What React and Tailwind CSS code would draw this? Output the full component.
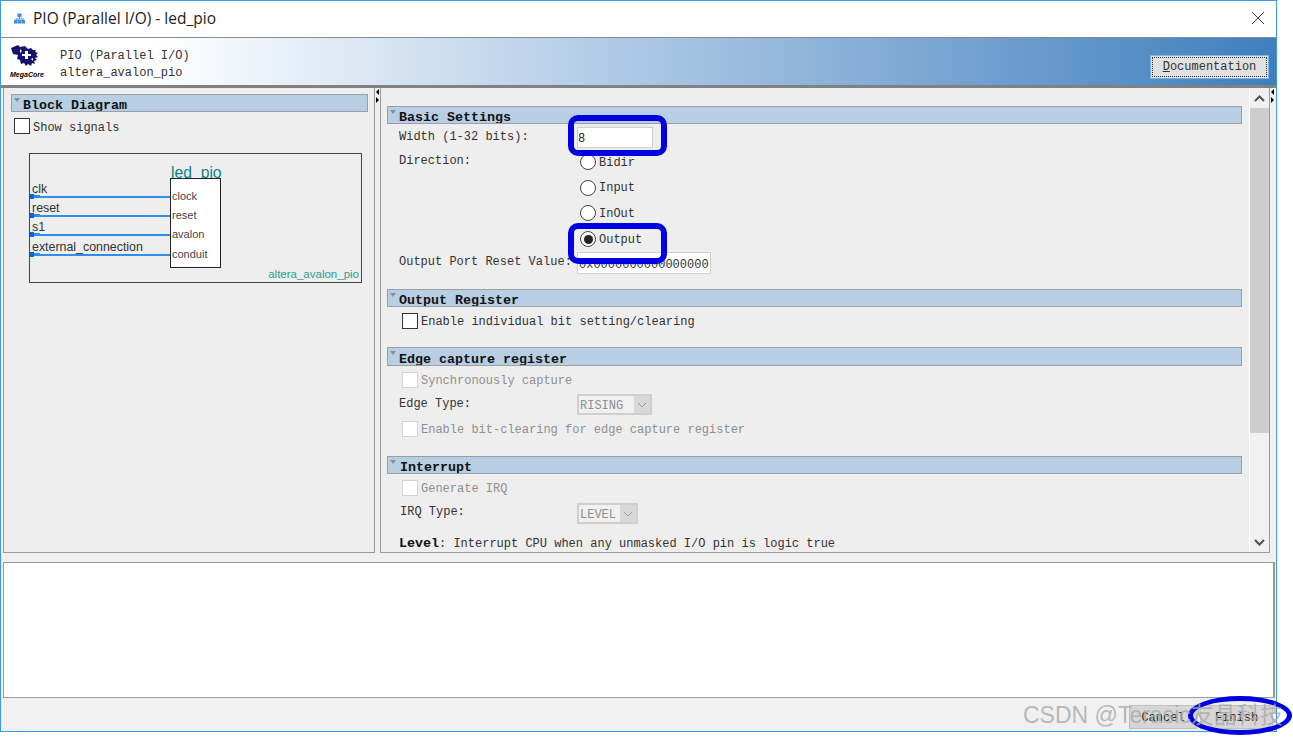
import React from "react";

const mono = "font-['Liberation_Mono',monospace]";

function Tri() {
  return <span className="self-start mt-[3px] ml-[1px] mr-[3px] w-0 h-0 border-x-[3px] border-x-transparent border-t-[4px] border-t-[#8a8f96] shrink-0" />;
}

function Bar({ title, h = "h-[18px]", titleClass = "" }) {
  return (
    <div className={`${h} flex items-end pl-[1px] bg-[#b8cee3] border border-[#9a9fa5] overflow-hidden`}>
      <Tri />
      <span className={`${mono} font-bold text-[13.33px] leading-[14px] mb-[-2px] text-[#111] whitespace-pre ${titleClass}`}>{title}</span>
    </div>
  );
}

function Check({ label, disabled, className = "" }) {
  return (
    <div className={`flex items-center h-[16px] pl-[3px] ${className}`}>
      <span className={`w-[16px] h-[16px] bg-white border shrink-0 ${disabled ? "border-[#d4d4d4]" : "border-[#333]"}`} />
      <span className={`ml-[3px] pt-[2px] text-[12px] whitespace-pre ${disabled ? "text-[#8f8f8f]" : "text-[#333]"}`}>{label}</span>
    </div>
  );
}

function Radio({ label, checked, h = "h-[26px]", labelClass = "pt-[2px]" }) {
  return (
    <div className={`flex items-center ${h} pl-[3px]`}>
      <span className="w-[16px] h-[16px] rounded-full bg-white border border-[#444] flex items-center justify-center shrink-0">
        {checked && <span className="w-[9px] h-[9px] rounded-full bg-[#222]" />}
      </span>
      <span className={`ml-[3px] text-[12px] text-[#333] ${labelClass}`}>{label}</span>
    </div>
  );
}

function Select({ value, w }) {
  return (
    <div className={`${w} h-[21px] bg-[#cfcfcf] p-[2px] flex`}>
      <div className="flex-1 bg-[#f0f0f0] text-[#8f8f8f] text-[12px] leading-[20px] pl-[1px]">{value}</div>
      <div className="w-[16px] bg-[#d8d8d8] flex items-center justify-center">
        <svg width="10" height="6" viewBox="0 0 10 6" fill="none" stroke="#9a9a9a" strokeWidth="1"><path d="M1 1l4 4 4-4" /></svg>
      </div>
    </div>
  );
}

function Logo() {
  return (
    <div className="w-[35px] flex flex-col items-start">
      <svg className="ml-[1px]" width="28" height="22" viewBox="0 0 28 22">
        <path d="M0 3 L7 0 L9 2 L14 1 L17 4 L20 3 L22 5 L25 5 L24 7 L27 8 L25 10 L27 12 L24 13 L26 15 L23 16 L24 19 L21 18 L20 21 L17 19 L15 21 L13 18 L10 19 L9 15 L6 14 L7 10 L2 9 Z" fill="#14146e" />
        <path d="M11 9h3V6h3v3h3v2h-3v3h-3v-3h-3z" fill="#fff" />
        <path d="M9 4l2 2-2 2zM20 14l2-1v3z" fill="#fff" />
      </svg>
      <span className="font-['Liberation_Sans',sans-serif] font-bold italic text-[7px] leading-[8px] text-black mt-[4px] whitespace-pre">MegaCore</span>
    </div>
  );
}

function Diagram() {
  const ys = [196, 215, 234, 254];
  const wires = ["clk", "reset", "s1", "external_connection"];
  const ports = ["clock", "reset", "avalon", "conduit"];
  return (
    <div className="relative mt-[19px] ml-[25px] w-[333px] h-[130px] border border-[#444] font-['Liberation_Sans',sans-serif] text-[12px] text-[#333]">
      <svg className="absolute left-0 top-0" width="331" height="128">
        {ys.map((y) => (
          <g key={y}>
            <rect x="0" y={y - 154} width="140" height="2" fill="#2f8eea" />
            <rect x="0" y={y - 155} width="10" height="3" fill="#2f8eea" />
            <rect x="0" y={y - 156} width="4" height="5" fill="#0a64dc" />
          </g>
        ))}
      </svg>
      {wires.map((t, i) => (
        <span key={t} className="absolute left-[2px] leading-[14px] text-[12.4px]" style={{ top: ys[i] - 168 }}>{t}</span>
      ))}
      <span className="absolute left-[141px] top-[10px] text-[15.7px] leading-[18px] text-[#0b8583]">led_pio</span>
      <div className="absolute left-[140px] top-[24px] w-[51px] h-[90px] bg-white border border-[#222]">
        {ports.map((t, i) => (
          <span key={t} className="absolute left-[1px] leading-[14px] text-[11px] text-[#444]" style={{ top: ys[i] - 186 }}>{t}</span>
        ))}
      </div>
      <span className="absolute right-[2px] top-[114px] text-[11.5px] leading-[13px] text-[#2a9d96]">altera_avalon_pio</span>
    </div>
  );
}

function Splitter() {
  return (
    <div className="w-[5px] flex flex-col items-center pt-[1px] gap-[2px] shrink-0">
      <span className="w-0 h-0 border-y-[3px] border-y-transparent border-r-[3px] border-r-black" />
      <span className="w-0 h-0 border-y-[3px] border-y-transparent border-l-[3px] border-l-black" />
    </div>
  );
}

function Settings() {
  return (
    <div className={`flex-1 min-w-0 h-full pt-[18px] pl-[6px] overflow-hidden ${mono} text-[12px] text-[#333]`}>
      <Bar title="Basic Settings" />
      <div className="pl-[12px]">
        <div className="flex mt-[3px] h-[21px]">
          <span className="w-[178px] leading-[20px]">Width (1-32 bits):</span>
          <div className="w-[76px] h-[21px] bg-white border border-[#d0d0d0] leading-[22px] text-[#222]">8</div>
        </div>
        <div className="flex">
          <span className="w-[178px] leading-[26px]">Direction:</span>
          <div className="flex flex-col mt-[1px]">
            <Radio label="Bidir" />
            <Radio label="Input" h="h-[25px]" labelClass="" />
            <Radio label="InOut" />
            <Radio label="Output" checked />
          </div>
        </div>
        <div className="flex h-[22px]">
          <span className="w-[178px] leading-[20px] whitespace-pre">Output Port Reset Value:</span>
          <div className="w-[134px] h-[22px] bg-white border border-[#d0d0d0] pl-[1px] leading-[24px] text-[#333]">0x0000000000000000</div>
        </div>
      </div>

      <div className="mt-[15px]"><Bar title="Output Register" /></div>
      <div className="pl-[12px] mt-[6px]"><Check label="Enable individual bit setting/clearing" /></div>

      <div className="mt-[18px]"><Bar title="Edge capture register" h="h-[19px]" /></div>
      <div className="pl-[12px]">
        <Check disabled label="Synchronously capture" className="mt-[6px]" />
        <div className="flex mt-[6px]">
          <span className="w-[178px] leading-[20px]">Edge Type:</span>
          <Select value="RISING" w="w-[75px]" />
        </div>
        <Check disabled label="Enable bit-clearing for edge capture register" className="mt-[6px]" />
      </div>

      <div className="mt-[19px]"><Bar title="Interrupt" titleClass="ml-[1px]" /></div>
      <div className="pl-[12px]">
        <Check disabled label="Generate IRQ" className="mt-[6px]" />
        <div className="flex mt-[7px]">
          <span className="w-[178px] leading-[18px] pl-[1px]">IRQ Type:</span>
          <Select value="LEVEL" w="w-[61px]" />
        </div>
        <div className="mt-[11px] leading-[18px] whitespace-pre"><b className="text-[13.33px] text-[#111]">Level</b>: Interrupt CPU when any unmasked I/O pin is logic true</div>
      </div>
    </div>
  );
}

function Scrollbar() {
  return (
    <div className="w-[20px] h-full shrink-0 ml-[7px] bg-[#f0f0f0] border-l border-white flex flex-col items-center">
      <div className="h-[20px] flex items-center justify-center">
        <svg width="11" height="7" viewBox="0 0 11 7" fill="none" stroke="#505050" strokeWidth="2"><path d="M1 6l4.500-4.500L10 6" /></svg>
      </div>
      <div className="w-full h-[325px] bg-[#cdcdcd]" />
      <div className="flex-1" />
      <div className="h-[20px] flex items-center justify-center">
        <svg width="11" height="7" viewBox="0 0 11 7" fill="none" stroke="#505050" strokeWidth="2"><path d="M1 1l4.500 4.500L10 1" /></svg>
      </div>
    </div>
  );
}

export default function App() {
  return (
    <div className="relative w-[1293px] h-[737px] bg-white overflow-hidden">
      <div className="w-[1277px] h-[732px] flex flex-col border border-[#3f9ae2] bg-[#f0f0f0]">
        <div className="h-[37px] shrink-0 pb-[2px] bg-white flex items-center font-['Open_Sans',sans-serif] text-[#222] border-b border-[#8b8b8b]">
          <svg className="ml-[13px]" width="11" height="11" viewBox="0 0 11 11" fill="#3a8fd8">
            <rect x="3.500" y="0.500" width="4" height="3.500" />
            <rect x="0" y="7" width="3.500" height="3.500" />
            <rect x="3.700" y="7" width="3.500" height="3.500" />
            <rect x="7.500" y="7" width="3.500" height="3.500" />
            <path d="M5 4h1v1.500h3.500V7h-1V6.500H2.500V7h-1V5.500H5z" />
          </svg>
          <span className="ml-[8px] text-[15.5px] leading-[20px]">PIO (Parallel I/O) - led_pio</span>
          <svg className="ml-auto mr-[11px]" width="14" height="14" viewBox="0 0 14 14" stroke="#444" strokeWidth="1" fill="none"><path d="M1 1l12 12M13 1L1 13" /></svg>
        </div>

        <div className="h-[50px] shrink-0 flex items-center pl-[9px] bg-linear-to-r from-white from-[12%] to-[#3e7fbd] border-b-[3px] border-[#7f8285] pr-[7px]">
          <Logo />
          <div className={`${mono} ml-[15px] mt-[6px] text-[12px] leading-[17px] text-[#333] whitespace-pre`}>
            <div>PIO (Parallel I/O)</div>
            <div>altera_avalon_pio</div>
          </div>
          <div className="ml-auto mt-[11px] w-[119px] h-[24px] bg-[#e1e1e1] border border-[#7fb6ea] p-[1px]">
            <div className={`${mono} h-full border border-dotted border-[#333] text-center text-[12px] leading-[18px] text-[#333]`}>
              <span className="underline">D</span>ocumentation
            </div>
          </div>
        </div>

        <div className="h-[465px] shrink-0 flex pl-[2px]">
          <div className="w-[372px] h-full border-x border-b border-[#9a9a9a] bg-[#eeeeee] pt-[6px] px-[7px] font-['Liberation_Mono',monospace] text-[12px] text-[#333]">
            <div className="w-[357px]"><Bar title="Block Diagram" /></div>
            <div className="flex items-center h-[16px] mt-[6px] pl-[3px]">
              <span className="w-[16px] h-[16px] bg-white border border-[#333]" />
              <span className="ml-[3px] pt-[3px]">Show signals</span>
            </div>
            <div className="-ml-[7px]"><Diagram /></div>
          </div>
          <Splitter />
          <div className="w-[890px] h-full border-x border-b border-[#9a9a9a] bg-[#eeeeee] flex">
            <Settings />
            <Scrollbar />
          </div>
          <Splitter />
        </div>

        <div className="h-[136px] shrink-0 mt-[9px] ml-[2px] mr-[1px] bg-white border border-[#9a9a9a] border-r-[2px]" />

        <div className={`flex-1 flex justify-end items-center pt-[5px] pr-[3px] gap-[3px] ${mono} text-[12px] text-[#222]`}>
          <div className="w-[68px] h-[24px] bg-[#d6d6d6] border border-[#c0c0c0] text-center leading-[24px]">Cancel</div>
          <div className="w-[73px] h-[24px] bg-[#d6d6d6] border border-[#c0c0c0] text-center leading-[24px]">Finish</div>
        </div>
      </div>

      <div className="absolute left-[568px] top-[115px] w-[99px] h-[41px] border-[6px] border-[#0000e0] rounded-[10px]" />
      <div className="absolute left-[568px] top-[223px] w-[99px] h-[41px] border-[6px] border-[#0000e0] rounded-[10px]" />
      <div className="absolute left-[1188px] top-[696px] w-[104px] h-[39px] border-[5px] border-[#0000e0] rounded-[50%]" />
      <span className="absolute left-[1023px] top-[700px] font-['Liberation_Sans','Noto_Sans_CJK_SC',sans-serif] text-[23px] leading-[30px] text-[#a8a8a8]/80 whitespace-pre">CSDN @Terasic友晶科技</span>
    </div>
  );
}
